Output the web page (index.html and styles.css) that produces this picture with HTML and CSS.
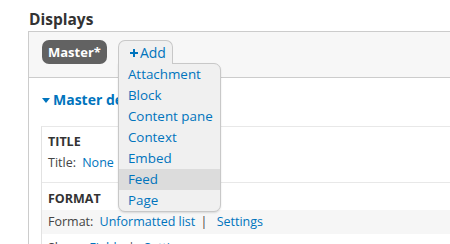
FILE: index.html
```html
<!DOCTYPE html>
<html lang="en">
<head>
  <meta charset="UTF-8" />
  <title>Displays</title>
  <link rel="stylesheet" href="styles.css">
</head>
<body>

<h2 class="section-title">Displays</h2>

<div class="displays">
  <div class="tabs">
    <span class="tab-master">Master*</span>
    <div class="add-menu">
      <span class="add-btn">
        <svg class="plus" width="8" height="8" viewBox="0 0 8 8"><rect x="3" y="0" width="2" height="8" fill="#0074bd"/><rect x="0" y="3" width="8" height="2" fill="#0074bd"/></svg>Add
      </span>
      <ul class="add-list">
        <li>Attachment</li>
        <li>Block</li>
        <li>Content pane</li>
        <li>Context</li>
        <li>Embed</li>
        <li class="hover">Feed</li>
        <li>Page</li>
      </ul>
    </div>
  </div>

  <div class="details-title"><span class="caret"></span>Master details</div>

  <div class="columns">
    <div class="section">
      <div class="section-head">TITLE</div>
      <div class="row">Title: <a>None</a></div>
    </div>
    <div class="section last">
      <div class="section-head">FORMAT</div>
      <div class="row alt">Format: <a>Unformatted list</a> <span class="sep">|</span> <a>Settings</a></div>
      <div class="row low">Show: <a>Fields</a> <span class="sep">|</span> <a>Settings</a></div>
    </div>
  </div>
</div>

</body>
</html>
```

FILE: styles.css
```css
body {
  margin: 0;
  font-family: 'Open Sans', 'DejaVu Sans', sans-serif;
  color: #333;
  background: #fff;
  overflow: hidden;
}
.section-title {
  font-size: 15.5px;
  font-weight: bold;
  line-height: 20px;
  margin: 9px 0 2px 29px;
}
.displays {
  margin-left: 28px;
  margin-right: -30px;
  border-left: 1px solid #ccc;
  border-top: 1px solid #ccc;
  height: 300px;
}
.tabs {
  display: flex;
  align-items: flex-start;
  gap: 11px;
  background: #f7f7f7;
  border-bottom: 1px solid #ccc;
  height: 37px;
  padding: 8px 0 0 13px;
}
.tab-master {
  background: #626262;
  color: #fff;
  font-weight: bold;
  font-size: 13px;
  height: 24px;
  line-height: 24px;
  padding: 0 6px;
  border-radius: 7px;
}
.add-menu {
  position: relative;
}
.add-btn {
  position: relative;
  z-index: 2;
  display: flex;
  align-items: center;
  gap: 2px;
  height: 23px;
  width: 42px;
  padding: 0 0 0 11px;
  background: #f0f0f0;
  border: 1px solid #c8c8c8;
  border-bottom: none;
  border-radius: 7px 7px 0 0;
  color: #0074bd;
  font-size: 14px;
}
.plus {
  display: block;
}
.add-list {
  position: absolute;
  z-index: 1;
  top: 23px;
  left: 0;
  width: 101px;
  margin: 0;
  padding: 0;
  list-style: none;
  background: #f0f0f0;
  border: 1px solid #c8c8c8;
  border-radius: 0 7px 7px 7px;
  box-shadow: 0 1px 2px rgba(0,0,0,0.12);
  overflow: hidden;
}
.add-list li {
  height: 21px;
  line-height: 21px;
  padding-left: 9px;
  font-size: 13.4px;
  color: #0074bd;
}
.add-list li.hover {
  background: #dcdcdc;
}
.details-title {
  display: flex;
  align-items: center;
  gap: 3px;
  margin: 12px 0 16px 13px;
  line-height: 20px;
  font-size: 14px;
  font-weight: bold;
  color: #0074bd;
}
.caret {
  width: 0;
  height: 0;
  border-left: 4px solid transparent;
  border-right: 4px solid transparent;
  border-top: 5px solid #0074bd;
}
.columns {
  margin-left: 12px;
  border-left: 1px solid #e2e2e2;
  border-top: 1px solid #e8e8e8;
}
.section {
  padding: 4px 0 9px;
  border-bottom: 1px solid #e8e8e8;
}
.section.last {
  padding-bottom: 0;
  border-bottom: none;
}
.section-head {
  font-size: 12.5px;
  font-weight: bold;
  height: 22px;
  line-height: 22px;
  padding-left: 6px;
}
.section.last .section-head {
  height: 23px;
  line-height: 23px;
}
.row {
  font-size: 12.5px;
  height: 20px;
  line-height: 20px;
  padding-left: 6px;
  color: #444;
}
.section.last .row {
  height: 24px;
  line-height: 24px;
}
.section.last .row.low {
  line-height: 28px;
}
.row.alt {
  background: #f6f6f6;
}
.row a {
  color: #0074bd;
  margin-left: 3px;
}
.sep {
  margin: 0 3px 0 2px;
}
```
